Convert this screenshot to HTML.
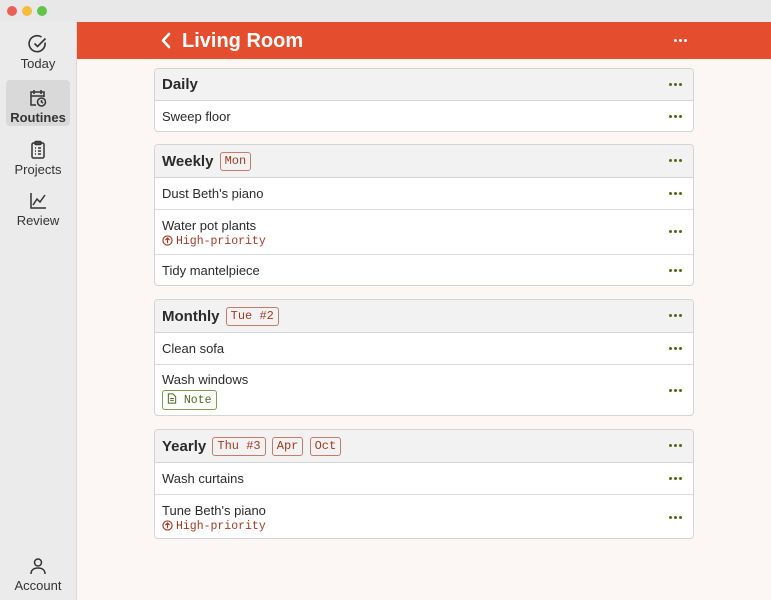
<!DOCTYPE html>
<html><head><style>
*{box-sizing:border-box;margin:0;padding:0}
body{width:771px;height:600px;overflow:hidden;font-family:"Liberation Sans","DejaVu Sans",sans-serif;background:#fcf7f4;position:relative;color:#2b2b2b}
.tb{position:absolute;left:0;top:0;width:771px;height:22px;background:#e8e8e8}
.dot{position:absolute;top:6px;width:10px;height:10px;border-radius:50%}
.side{position:absolute;left:0;top:22px;width:77px;height:578px;background:#ebebeb;border-right:1px solid #d8d8d8}
.nav{position:absolute;left:6px;width:64px;height:46px;text-align:center;font-size:13px;color:#333}
.nav svg{display:block;margin:8px auto 2px}
.nav.act{background:#d9d9d9;border-radius:4px;font-weight:bold}
.hdr{position:absolute;left:77px;top:22px;width:694px;height:37px;background:#e44d2e;color:#fff}
.hdr .t{position:absolute;left:105px;top:8px;font-size:20px;font-weight:bold}
.card{position:absolute;left:154px;width:540px;border:1px solid #d4d4d4;border-radius:4px;background:#fff;overflow:hidden}
.ch{height:32px;background:#f2f2f2;border-bottom:1px solid #d4d4d4;position:relative;padding-left:7px;font-size:15px;font-weight:bold;line-height:31px}
.row{position:relative;border-bottom:1px solid #ddd;padding-left:7px;font-size:13px;height:32px;line-height:31px}
.row:last-child{border-bottom:none}
.row.two{line-height:normal;padding-top:8px}
.dots{position:absolute;right:10px;top:50%;margin-top:-2px;width:14px;height:3px}
.dots i{position:absolute;top:0;width:3px;height:3px;border-radius:50%;background:#5a6614}
.tag{display:inline-block;font-family:"Liberation Mono",monospace;font-size:12px;font-weight:normal;color:#a63a22;border:1px solid #c77a66;border-radius:3px;padding:0 4px;line-height:17px;margin-left:2px;vertical-align:2px}
.hp{font-family:"Liberation Mono",monospace;font-size:11.5px;color:#a63a22;margin-top:2px}
.hp svg{vertical-align:-2px;margin-right:3px}
.note{display:inline-block;font-family:"Liberation Mono",monospace;font-size:11.5px;color:#4a6a1a;border:1px solid #7aa04a;border-radius:3px;padding:2px 4px;margin-top:3px}
</style></head><body>
<div class="tb"><div class="dot" style="left:7px;background:#ec5f56"></div><div class="dot" style="left:22px;background:#f4bd3b"></div><div class="dot" style="left:37px;background:#5ec548"></div></div>
<div class="side">
<div class="nav" style="top:4px"><svg width="20" height="20" viewBox="0 0 20 20" fill="none" stroke="#333" stroke-width="1.6"><path d="M17 8.5A8 8 0 1 1 13.5 3"/><path d="M6.5 9.5l3 3 8-8"/></svg>Today</div>
<div class="nav act" style="top:58px"><svg width="20" height="20" viewBox="0 0 20 20" fill="none" stroke="#333" stroke-width="1.5"><path d="M8 17H3V4h13v5M3 8h13M6 2v4M13 2v4"/><circle cx="13.5" cy="14" r="4"/><path d="M13.5 12v2l1.5 1"/></svg>Routines</div>
<div class="nav" style="top:110px"><svg width="20" height="20" viewBox="0 0 20 20" fill="none" stroke="#333" stroke-width="1.5"><rect x="4" y="3" width="12" height="15" rx="1.5"/><rect x="7" y="1.5" width="6" height="3" rx="1"/><path d="M7 8h1M10 8h3M7 11h1M10 11h3M7 14h1M10 14h3"/></svg>Projects</div>
<div class="nav" style="top:161px"><svg width="20" height="20" viewBox="0 0 20 20" fill="none" stroke="#333" stroke-width="1.5"><path d="M3 2v15h15"/><path d="M5 14l4-6 3 3 5-7"/></svg>Review</div>
<div class="nav" style="top:526px"><svg width="20" height="20" viewBox="0 0 20 20" fill="none" stroke="#333" stroke-width="1.5"><circle cx="10" cy="6.5" r="3.5"/><path d="M3 18c0-4 3-6 7-6s7 2 7 6"/></svg>Account</div>
</div>
<div class="hdr"><svg style="position:absolute;left:83px;top:10px" width="12" height="17" viewBox="0 0 12 17" fill="none" stroke="#fff" stroke-width="2.6" stroke-linecap="round" stroke-linejoin="round"><path d="M9 2L3 8.5 9 15"/></svg><div class="t">Living Room</div>
<div class="dots" style="right:83px;top:17px;margin:0"><i style="left:0;background:#fff"></i><i style="left:5px;background:#fff"></i><i style="left:10px;background:#fff"></i></div></div>

<div class="card" style="top:68px;height:64px"><div class="ch">Daily<div class="dots"><i style="left:0"></i><i style="left:5px"></i><i style="left:10px"></i></div></div>
<div class="row" style="height:31px">Sweep floor<div class="dots"><i style="left:0"></i><i style="left:5px"></i><i style="left:10px"></i></div></div></div>

<div class="card" style="top:144px;height:142px"><div class="ch" style="height:33px;line-height:33px">Weekly <span class="tag">Mon</span><div class="dots"><i style="left:0"></i><i style="left:5px"></i><i style="left:10px"></i></div></div>
<div class="row">Dust Beth's piano<div class="dots"><i style="left:0"></i><i style="left:5px"></i><i style="left:10px"></i></div></div>
<div class="row two" style="height:45px">Water pot plants<div class="hp"><svg width="11" height="11" viewBox="0 0 12 12" fill="none" stroke="#a63a22" stroke-width="1.3"><circle cx="6" cy="6" r="5"/><path d="M6 9V3.5M3.8 5.5L6 3.3 8.2 5.5"/></svg>High-priority</div><div class="dots"><i style="left:0"></i><i style="left:5px"></i><i style="left:10px"></i></div></div>
<div class="row">Tidy mantelpiece<div class="dots"><i style="left:0"></i><i style="left:5px"></i><i style="left:10px"></i></div></div></div>

<div class="card" style="top:299px;height:117px"><div class="ch" style="height:33px;line-height:33px">Monthly <span class="tag">Tue #2</span><div class="dots"><i style="left:0"></i><i style="left:5px"></i><i style="left:10px"></i></div></div>
<div class="row">Clean sofa<div class="dots"><i style="left:0"></i><i style="left:5px"></i><i style="left:10px"></i></div></div>
<div class="row two" style="height:52px;padding-top:7px">Wash windows<br><span class="note"><svg width="10" height="11" viewBox="0 0 10 12" fill="none" stroke="#4a6a1a" stroke-width="1.1" style="vertical-align:-1px"><path d="M1 1h5l3 3v7H1z M3 6h4M3 8h4"/></svg> Note</span><div class="dots"><i style="left:0"></i><i style="left:5px"></i><i style="left:10px"></i></div></div></div>

<div class="card" style="top:429px;height:110px"><div class="ch" style="height:33px;line-height:33px">Yearly <span class="tag">Thu #3</span> <span class="tag">Apr</span> <span class="tag">Oct</span><div class="dots"><i style="left:0"></i><i style="left:5px"></i><i style="left:10px"></i></div></div>
<div class="row">Wash curtains<div class="dots"><i style="left:0"></i><i style="left:5px"></i><i style="left:10px"></i></div></div>
<div class="row two" style="height:45px">Tune Beth's piano<div class="hp"><svg width="11" height="11" viewBox="0 0 12 12" fill="none" stroke="#a63a22" stroke-width="1.3"><circle cx="6" cy="6" r="5"/><path d="M6 9V3.5M3.8 5.5L6 3.3 8.2 5.5"/></svg>High-priority</div><div class="dots"><i style="left:0"></i><i style="left:5px"></i><i style="left:10px"></i></div></div></div>
</body></html>
